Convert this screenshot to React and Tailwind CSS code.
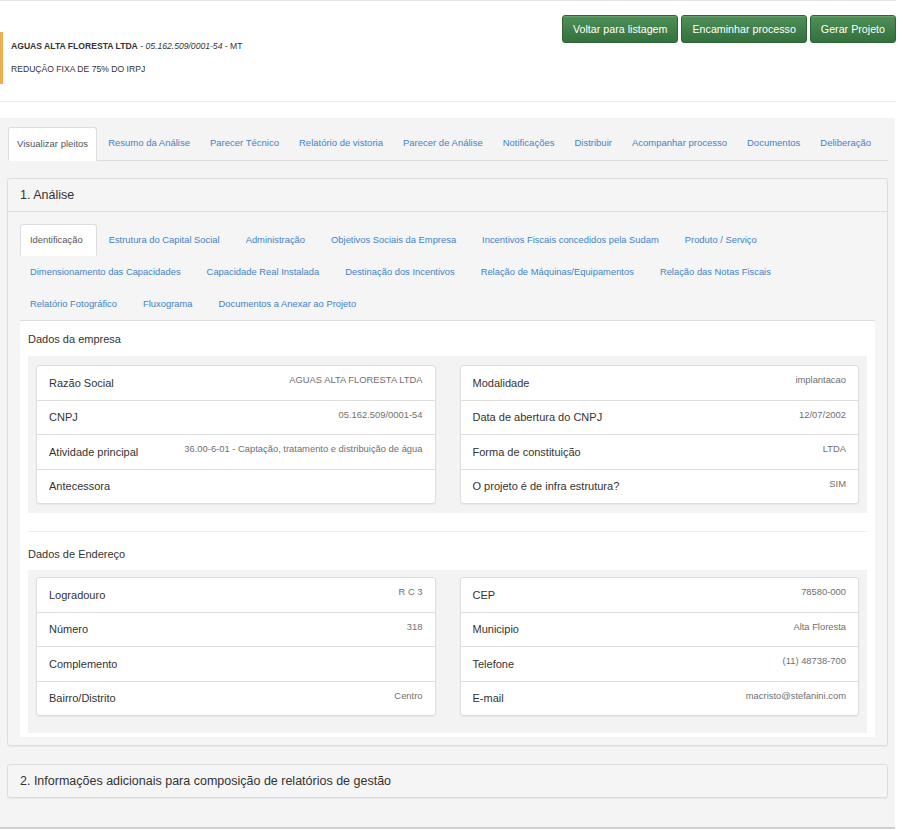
import React from 'react';

const topTabs = [
  'Visualizar pleitos',
  'Resumo da Análise',
  'Parecer Técnico',
  'Relatório de vistoria',
  'Parecer de Análise',
  'Notificações',
  'Distribuir',
  'Acompanhar processo',
  'Documentos',
  'Deliberação',
];

const innerTabRows = [
  ['Identificação', 'Estrutura do Capital Social', 'Administração', 'Objetivos Sociais da Empresa', 'Incentivos Fiscais concedidos pela Sudam', 'Produto / Serviço'],
  ['Dimensionamento das Capacidades', 'Capacidade Real Instalada', 'Destinação dos Incentivos', 'Relação de Máquinas/Equipamentos', 'Relação das Notas Fiscais'],
  ['Relatório Fotográfico', 'Fluxograma', 'Documentos a Anexar ao Projeto'],
];

const empresaLeft = [
  ['Razão Social', 'AGUAS ALTA FLORESTA LTDA'],
  ['CNPJ', '05.162.509/0001-54'],
  ['Atividade principal', '36.00-6-01 - Captação, tratamento e distribuição de água'],
  ['Antecessora', ''],
];

const empresaRight = [
  ['Modalidade', 'implantacao'],
  ['Data de abertura do CNPJ', '12/07/2002'],
  ['Forma de constituição', 'LTDA'],
  ['O projeto é de infra estrutura?', 'SIM'],
];

const enderecoLeft = [
  ['Logradouro', 'R C 3'],
  ['Número', '318'],
  ['Complemento', ''],
  ['Bairro/Distrito', 'Centro'],
];

const enderecoRight = [
  ['CEP', '78580-000'],
  ['Municipio', 'Alta Floresta'],
  ['Telefone', '(11) 48738-700'],
  ['E-mail', 'macristo@stefanini.com'],
];

function GreenButton({ children }) {
  return (
    <button className="h-[28px] px-[10px] rounded-[3px] border border-[#2e6436] bg-linear-to-b from-[#4f9058] to-[#33703d] text-white text-[10.7px] leading-none shadow-[inset_0_1px_0_rgba(255,255,255,0.15)]">
      {children}
    </button>
  );
}

function TopTab({ label, active }) {
  if (active) {
    return (
      <div className="h-[34px] -mb-px mr-[2px] px-[8px] flex items-center bg-white border border-[#ddd] border-b-white rounded-t-[3px] text-[#555]">
        {label}
      </div>
    );
  }
  return (
    <div className="h-[33px] mr-[2px] px-[8px] flex items-center border border-transparent text-[#3f83c4]">
      {label}
    </div>
  );
}

function InnerTab({ label, active }) {
  if (active) {
    return (
      <div className="h-[32px] mr-[2px] pl-[9px] pr-[13px] flex items-center bg-white border border-[#ddd] border-b-white rounded-t-[3px] text-[#555]">
        {label}
      </div>
    );
  }
  return (
    <div className="h-[32px] mr-[2px] pl-[9px] pr-[13px] flex items-center border border-transparent text-[#3f83c4]">
      {label}
    </div>
  );
}

function InfoList({ rows }) {
  return (
    <div className="bg-white border border-[#ddd] rounded-[3px] shadow-[0_1px_1px_rgba(0,0,0,0.05)]">
      {rows.map(([label, value], i) => (
        <div
          key={label}
          className={
            'px-[12px] flex items-center justify-between ' +
            (i < rows.length - 1 ? 'h-[34.5px] border-b border-[#ddd]' : 'h-[33.5px]')
          }
        >
          <span className="text-[11px] text-[#333]">{label}</span>
          <span className="mb-[5px] text-[9.4px] text-[#6f6f6f]">{value}</span>
        </div>
      ))}
    </div>
  );
}

export default function App() {
  return (
    <div className="w-[903px] min-h-[830px] bg-white font-['Liberation_Sans',Arial,sans-serif] text-[#333]">
      {/* cabeçalho */}
      <div className="w-[896px] h-[102px] border-t border-b border-t-[#e3e3e3] border-b-[#ececec] flex justify-between items-start">
        <div className="mt-[31px] border-l-[3px] border-[#f0ad4e] pl-[8px] pt-[8px] pb-[9px] pr-4">
          <p className="text-[8.6px] leading-[12px]">
            <b>AGUAS ALTA FLORESTA LTDA</b> - <i>05.162.509/0001-54</i> - MT
          </p>
          <p className="mt-[11px] text-[8.6px] leading-[12px]">REDUÇÃO FIXA DE 75% DO IRPJ</p>
        </div>
        <div className="mt-[14px] flex gap-[3px]">
          <GreenButton>Voltar para listagem</GreenButton>
          <GreenButton>Encaminhar processo</GreenButton>
          <GreenButton>Gerar Projeto</GreenButton>
        </div>
      </div>

      <div className="mt-[16px] w-[895px] bg-[#f4f4f4] pt-[9px] px-[7px] pb-[29px] border-b-2 border-[#cfcfcf]">
        {/* abas principais */}
        <div className="ml-px flex border-b border-[#ddd] text-[9.5px]">
          {topTabs.map((t, i) => (
            <TopTab key={t} label={t} active={i === 0} />
          ))}
        </div>

        {/* painel 1 */}
        <div className="mt-[17px] border border-[#ddd] rounded-[3px] bg-[#f5f5f5] shadow-[0_1px_1px_rgba(0,0,0,0.05)]">
          <div className="h-[33px] px-[12px] flex items-center border-b border-[#ddd] text-[12.5px] text-[#333]">
            1. Análise
          </div>
          <div className="pt-[12px] px-[12px] pb-[8px]">
            <div className="border-b border-[#ddd] text-[9.4px]">
              {innerTabRows.map((row, r) => (
                <div key={r} className="flex">
                  {row.map((t, i) => (
                    <InnerTab key={t} label={t} active={r === 0 && i === 0} />
                  ))}
                </div>
              ))}
            </div>

            <div className="bg-white px-[8px] pt-[9px] pb-[4px]">
              <h4 className="text-[11px] leading-[18px] text-[#333]">Dados da empresa</h4>
              <div className="mt-[8px] bg-[#f3f3f3] px-[8px] pt-[9px] pb-[9px] grid grid-cols-2 gap-[24px]">
                <InfoList rows={empresaLeft} />
                <InfoList rows={empresaRight} />
              </div>

              <hr className="mt-[18px] border-t border-[#eee]" />

              <h4 className="mt-[13px] text-[11px] leading-[18px] text-[#333]">Dados de Endereço</h4>
              <div className="mt-[7px] bg-[#f3f3f3] px-[8px] pt-[7px] pb-[17px] grid grid-cols-2 gap-[24px]">
                <InfoList rows={enderecoLeft} />
                <InfoList rows={enderecoRight} />
              </div>
            </div>
          </div>
        </div>

        {/* painel 2 */}
        <div className="mt-[18px] h-[34px] px-[12px] flex items-center border border-[#ddd] rounded-[3px] bg-[#f5f5f5] shadow-[0_1px_1px_rgba(0,0,0,0.05)] text-[12.5px] text-[#333]">
          2. Informações adicionais para composição de relatórios de gestão
        </div>
      </div>
    </div>
  );
}
